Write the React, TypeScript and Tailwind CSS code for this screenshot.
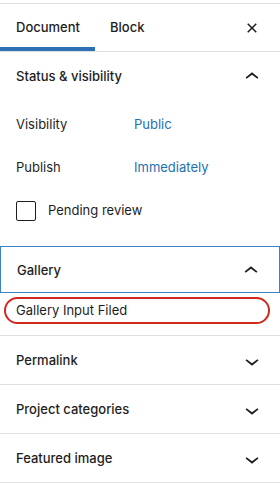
const ChevronUp = () => (
  <svg viewBox="0 0 24 24" className="w-7 h-7 fill-[#1e1e1e]">
    <path d="M6.5 12.4L12 8l5.5 4.4-.9 1.2L12 10l-4.6 3.6-.9-1.2z" />
  </svg>
);

const ChevronDown = () => (
  <svg viewBox="0 0 24 24" className="w-7 h-7 fill-[#1e1e1e]">
    <path d="M17.5 11.6L12 16l-5.5-4.4.9-1.2L12 14l4.6-3.6 1 1.2z" />
  </svg>
);

const CloseIcon = () => (
  <svg viewBox="0 0 24 24" className="w-6 h-6 fill-[#1e1e1e]">
    <path d="M12 13.06l3.712 3.713 1.061-1.06L13.061 12l3.712-3.712-1.06-1.06L12 10.938 8.288 7.227l-1.061 1.06L10.939 12l-3.712 3.712 1.06 1.061L12 13.061z" />
  </svg>
);

function PanelHeader({ title, open }: { title: string; open?: boolean }) {
  return (
    <div className="flex items-center justify-between h-12 pl-4 pr-[14px] pt-[2px]">
      <span className="text-[13px] font-medium">{title}</span>
      {open ? <ChevronUp /> : <ChevronDown />}
    </div>
  );
}

export default function App() {
  return (
    <div
      className="w-[280px] h-[484px] bg-white text-[#1e1e1e] overflow-hidden"
      style={{ fontFamily: "Inter, 'Noto Sans', sans-serif" }}
    >
      <div className="h-[3px]" />
      {/* tabs */}
      <div className="flex items-stretch h-[49px] border-t border-b border-[#e0e0e0]">
        <div className="w-[95px] pl-4 flex items-center text-[13px] font-medium border-b-4 border-[#2f6fb3] pt-[5px]">
          Document
        </div>
        <div className="pl-[15px] flex items-center text-[13px] font-medium pt-px">Block</div>
        <div className="ml-auto pr-4 flex items-center pt-px">
          <CloseIcon />
        </div>
      </div>

      {/* status & visibility */}
      <div className="border-b border-[#e0e0e0]">
        <PanelHeader title="Status & visibility" open />
        <div className="px-4 text-[13px]">
          <div className="flex items-center h-12 pt-[2px]">
            <span className="w-[118px]">Visibility</span>
            <span className="text-[#2271b1]">Public</span>
          </div>
          <div className="flex items-center h-[40px]">
            <span className="w-[118px]">Publish</span>
            <span className="text-[#2271b1]">Immediately</span>
          </div>
          <div className="flex items-center gap-3 mt-[13px] pb-[25px]">
            <span className="w-5 h-5 border border-[#1e1e1e] rounded-[2px]" />
            <span>Pending review</span>
          </div>
        </div>
      </div>

      {/* gallery */}
      <div className="border-b border-[#e0e0e0] pb-[11px]">
        <div className="flex items-center justify-between h-[47px] pl-4 pr-[14px] border border-[#3b82c4] -mt-px pt-[2px]">
          <span className="text-[13px] font-medium">Gallery</span>
          <ChevronUp />
        </div>
        <div className="mt-1 ml-1 w-[266px] h-[27px] border-2 border-[#d0291c] rounded-full flex items-center pl-[10px] text-[13px]">
          Gallery Input Filed
        </div>
      </div>

      <div className="border-b border-[#e0e0e0]">
        <PanelHeader title="Permalink" />
      </div>
      <div className="border-b border-[#e0e0e0]">
        <PanelHeader title="Project categories" />
      </div>
      <div className="border-b border-[#e0e0e0]">
        <PanelHeader title="Featured image" />
      </div>
    </div>
  );
}
